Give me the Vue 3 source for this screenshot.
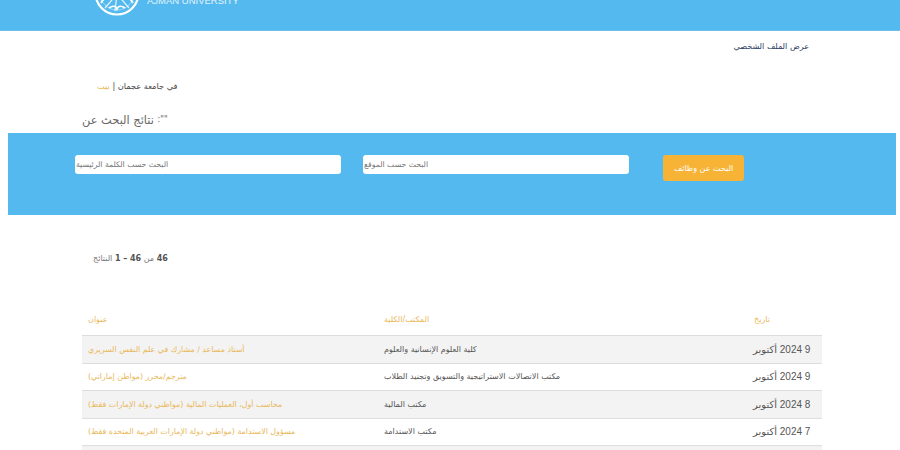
<template>
  <div class="page">
    <header class="site-header">
      <svg class="logo" width="46" height="46" viewBox="0 0 46 46">
        <circle cx="23" cy="23" r="21.5" fill="none" stroke="#fff" stroke-width="2.2" />
        <circle cx="23" cy="23" r="17" fill="none" stroke="#fff" stroke-width="0.8" opacity="0.55" />
        <path d="M7 33 C11 26 15 25 19 29 M39 33 C35 26 31 25 27 29" fill="none" stroke="#fff" stroke-width="2" opacity="0.9" />
        <path d="M11 38 L23 24 L35 38 M23 24 L21 41" fill="none" stroke="#fff" stroke-width="1.3" opacity="0.8" />
        <path d="M15 38 C19 35 22 36 23 39 C24 36 27 35 31 38" fill="none" stroke="#fff" stroke-width="1.6" />
      </svg>
      <span class="logo-name">AJMAN UNIVERSITY</span>
    </header>

    <div class="profile-row">
      <a class="profile-link">عرض الملف الشخصي</a>
    </div>

    <div class="crumbs">
      <a class="gold">بيت</a> | <span dir="rtl">في جامعة عجمان</span>
    </div>

    <h1 class="results-title"><span dir="rtl">نتائج البحث عن</span> <span class="quote">:""</span></h1>

    <section class="search-band">
      <input class="field" placeholder="البحث حسب الكلمة الرئيسية" />
      <input class="field" placeholder="البحث حسب الموقع" />
      <button class="search-btn">البحث عن وظائف</button>
    </section>

    <p class="count"><span class="count-word" dir="rtl">النتائج</span> <b>1 – 46</b> <span class="count-word" dir="rtl">من</span> <b>46</b></p>

    <table class="jobs">
      <thead>
        <tr>
          <th class="c-title">عنوان</th>
          <th class="c-office">المكتب/الكلية</th>
          <th>تاريخ</th>
        </tr>
      </thead>
      <tbody>
        <tr v-for="job in jobs" :key="job.title">
          <td class="gold title">{{ job.title }}</td>
          <td class="office">{{ job.office }}</td>
          <td class="date"><span dir="rtl">أكتوبر</span> {{ job.date }}</td>
        </tr>
        <tr class="cut-row"><td colspan="3"></td></tr>
      </tbody>
    </table>
  </div>
</template>

<script setup>
const jobs = [
  { title: 'أستاذ مساعد / مشارك في علم النفس السريري', office: 'كلية العلوم الإنسانية والعلوم', date: '2024 9' },
  { title: 'مترجم/محرر (مواطن إماراتي)', office: 'مكتب الاتصالات الاستراتيجية والتسويق وتجنيد الطلاب', date: '2024 9' },
  { title: 'محاسب أول، العمليات المالية (مواطني دولة الإمارات فقط)', office: 'مكتب المالية', date: '2024 8' },
  { title: 'مسؤول الاستدامة (مواطني دولة الإمارات العربية المتحدة فقط)', office: 'مكتب الاستدامة', date: '2024 7' }
]
</script>

<style>
html, body {
  overflow: hidden;
  background: #fff;
}
</style>

<style scoped>
.page {
  font-family: "DejaVu Sans", "Liberation Sans", sans-serif;
  color: #444;
  font-size: 8px;
}

.gold {
  color: #e9b85a;
}

.site-header {
  height: 31px;
  box-sizing: border-box;
  background: #53b9ee;
  border-bottom: 1px solid #6cc0ea;
  overflow: hidden;
  display: flex;
  align-items: flex-end;
  padding: 0 0 14px 94px;
  gap: 7px;
}

.logo {
  flex: none;
}

.logo-name {
  font-family: "Liberation Sans", sans-serif;
  font-size: 9.5px;
  line-height: 10px;
  color: #e2f3fc;
  margin-bottom: 10px;
}

.profile-row {
  display: flex;
  justify-content: flex-end;
  padding: 9px 91px 0 0;
  height: 18px;
}

.profile-link {
  color: #2c3c63;
  font-size: 8.1px;
  line-height: 12px;
}

.crumbs {
  margin: 22px 0 0 97px;
  font-size: 8.2px;
  line-height: 12px;
  color: #444;
}

.results-title {
  margin: 21px 0 0 82px;
  font-size: 11.4px;
  line-height: 14px;
  font-weight: normal;
  color: #666;
}

.quote {
  font-size: 8px;
  vertical-align: 2px;
}

.search-band {
  margin: 6px 4px 0 8px;
  height: 82px;
  box-sizing: border-box;
  background: #53b9ee;
  display: flex;
  align-items: flex-start;
  padding: 22px 0 0 67px;
  gap: 22px;
}

.field {
  width: 266px;
  height: 19px;
  box-sizing: border-box;
  border: none;
  border-radius: 3px;
  background: #fff;
  padding: 0 1px;
  font: 7.7px "DejaVu Sans", sans-serif;
}

.field::placeholder {
  color: #777;
  opacity: 1;
}

.search-btn {
  width: 81px;
  height: 26px;
  margin-left: 12px;
  border: none;
  border-radius: 3px;
  background: #f6b335;
  color: #fff;
  font: 8px "DejaVu Sans", sans-serif;
}

.count {
  margin: 38px 0 0 93px;
  line-height: 12px;
  font-size: 8px;
  color: #555;
}

.count-word {
  color: #777;
}

.jobs {
  margin: 41px 0 0 82px;
  width: 740px;
  border-collapse: collapse;
  table-layout: fixed;
}

.jobs th {
  height: 27px;
  padding: 0 0 2px 6px;
  text-align: left;
  font-weight: normal;
  color: #e9b85a;
  font-size: 8px;
  border-bottom: 1px solid #ddd;
}

.jobs td {
  height: 26px;
  padding: 0 0 1px 6px;
  font-size: 8px;
  border-bottom: 1px solid #ddd;
}

.jobs .c-title {
  width: 290px;
}

.jobs .c-office {
  width: 364px;
}

.jobs tbody tr:nth-child(odd) {
  background: #f3f3f3;
}

.jobs tbody tr:nth-child(even) td {
  height: 25px;
}

.jobs .title {
  font-size: 7.9px;
}

.jobs .office {
  color: #555;
}

.jobs .date {
  padding-left: 5px;
  font-family: "Liberation Sans", "DejaVu Sans", sans-serif;
  font-size: 10px;
  color: #555;
  white-space: nowrap;
}
</style>
